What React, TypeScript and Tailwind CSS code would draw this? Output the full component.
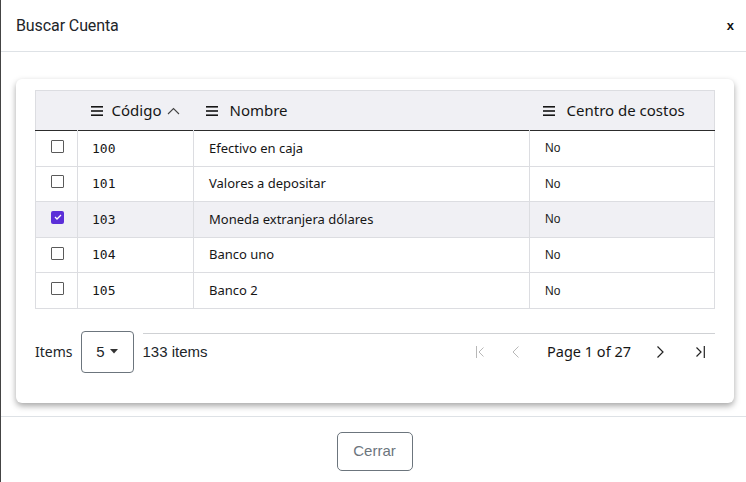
import React from "react";

const rows = [
  { code: "100", name: "Efectivo en caja", cc: "No", checked: false },
  { code: "101", name: "Valores a depositar", cc: "No", checked: false },
  { code: "103", name: "Moneda extranjera dólares", cc: "No", checked: true },
  { code: "104", name: "Banco uno", cc: "No", checked: false },
  { code: "105", name: "Banco 2", cc: "No", checked: false },
];

function Menu() {
  return (
    <svg width="12" height="10" viewBox="0 0 12 10" className="shrink-0">
      <rect x="0" y="0" width="12" height="1.6" fill="#161616" />
      <rect x="0" y="4.2" width="12" height="1.6" fill="#161616" />
      <rect x="0" y="8.4" width="12" height="1.6" fill="#161616" />
    </svg>
  );
}

function Check({ checked }: { checked: boolean }) {
  if (checked)
    return (
      <div className="w-[13px] h-[13px] rounded-[2px] bg-[#5b2fd8] flex items-center justify-center">
        <svg width="8" height="6" viewBox="0 0 8 6">
          <path d="M1 3 L3 5 L7 1" stroke="#fff" strokeWidth="1.3" fill="none" />
        </svg>
      </div>
    );
  return <div className="w-[13px] h-[13px] rounded-[1px] border border-[#5a5a5a] bg-white" />;
}

export default function App() {
  const plex = { fontFamily: "'Noto Sans', Inter, sans-serif" };
  return (
    <div className="w-[746px] h-[482px] bg-white border-l border-[#444] flex flex-col overflow-hidden" style={{ fontFamily: "'Liberation Sans', Arial, sans-serif" }}>
      <div className="h-[52px] shrink-0 border-b border-[#dee2e6] flex items-center justify-between pl-[15px] pr-[12px]">
        <div className="text-[16px] text-[#212529] tracking-[-0.1px]" style={{ fontFamily: "Roboto, sans-serif" }}>Buscar Cuenta</div>
        <div className="text-[13px] font-bold text-[#111] leading-none">x</div>
      </div>
      <div className="flex-1 pl-[15px] pr-[12px] pt-[27px]">
        <div className="bg-white rounded-[6px] shadow-[0_3px_6px_rgba(0,0,0,0.35)] px-[19px] pt-[11px] pb-[30px]">
          <table className="w-full border-collapse border border-[#dcdde1] text-[#161616]">
            <thead>
              <tr className="bg-[#f0f0f4] h-[40px] border-b border-[#2c2c2c]">
                <th className="w-[42px]"></th>
                <th className="w-[116px] text-left font-normal pl-[13px]">
                  <div className="flex items-center gap-[9px] text-[15px]" style={plex}>
                    <Menu />
                    <span>Código</span>
                    <svg width="13" height="8" viewBox="0 0 13 8" className="-ml-[3px]">
                      <path d="M1 7 L6.5 1.5 L12 7" stroke="#444" strokeWidth="1.1" fill="none" />
                    </svg>
                  </div>
                </th>
                <th className="w-[336px] text-left font-normal pl-[12px]">
                  <div className="flex items-center gap-[12px] text-[15px]" style={plex}>
                    <Menu />
                    <span>Nombre</span>
                  </div>
                </th>
                <th className="text-left font-normal pl-[13px]">
                  <div className="flex items-center gap-[12px] text-[15px]" style={plex}>
                    <Menu />
                    <span>Centro de costos</span>
                  </div>
                </th>
              </tr>
            </thead>
            <tbody>
              {rows.map((r) => (
                <tr key={r.code} className={`h-[35.6px] border-b border-[#dcdde1] ${r.checked ? "bg-[#f0f0f4]" : "bg-white"}`}>
                  <td className="border-r border-[#dcdde1] pl-[15px]">
                    <div className="-mt-[4px]"><Check checked={r.checked} /></div>
                  </td>
                  <td className="border-r border-[#dcdde1] pl-[14px] text-[13px]" style={{ fontFamily: "'DejaVu Sans Mono', monospace" }}>{r.code}</td>
                  <td className="border-r border-[#dcdde1] pl-[15px] text-[13px]" style={plex}>{r.name}</td>
                  <td className="pl-[15px] text-[12px] text-[#222]">{r.cc}</td>
                </tr>
              ))}
            </tbody>
          </table>
          <div className="flex items-stretch mt-[22px] h-[42px]">
            <span className="self-center text-[14px] text-[#212529]" style={plex}>Items</span>
            <div className="ml-[8px] w-[53px] h-[42px] border border-[#6c757d] rounded-[4px] flex items-center justify-center gap-[5px] text-[15px] text-[#212529]">
              <span>5</span>
              <svg width="8" height="5" viewBox="0 0 8 5"><path d="M0 0 L8 0 L4 4.5 Z" fill="#333" /></svg>
            </div>
            <div className="flex-1 mt-[2px] flex items-center border-t border-[#cfd1d4] ml-[9px] pb-[3px]">
              <span className="text-[15px] text-[#212529]">133 items</span>
              <div className="ml-auto flex items-center text-[#161616] pr-[10px]">
                <svg width="8" height="14" viewBox="0 0 8 14" className="mr-[28px]"><path d="M0.5 1 V13 M7.5 2.5 L3 7 L7.5 11.5" stroke="#b8b8b8" strokeWidth="1" fill="none" /></svg>
                <svg width="7" height="14" viewBox="0 0 7 14" className="mr-[28px]"><path d="M6.5 1.5 L1 7 L6.5 12.5" stroke="#b8b8b8" strokeWidth="1" fill="none" /></svg>
                <span className="text-[14.5px]" style={plex}>Page 1 of 27</span>
                <svg width="7" height="14" viewBox="0 0 7 14" className="ml-[26px]"><path d="M0.5 1.5 L6 7 L0.5 12.5" stroke="#222" strokeWidth="1.2" fill="none" /></svg>
                <svg width="9" height="14" viewBox="0 0 9 14" className="ml-[32px]"><path d="M0.5 2.5 L5 7 L0.5 11.5 M8.3 1 V13" stroke="#222" strokeWidth="1.2" fill="none" /></svg>
              </div>
            </div>
          </div>
        </div>
      </div>
      <div className="h-[66px] shrink-0 border-t border-[#dee2e6] flex items-start justify-center pt-[15px] pl-[2px]">
        <button className="w-[76px] h-[39px] border border-[#6c757d] rounded-[5px] text-[#6c757d] text-[15px] bg-white">Cerrar</button>
      </div>
    </div>
  );
}
